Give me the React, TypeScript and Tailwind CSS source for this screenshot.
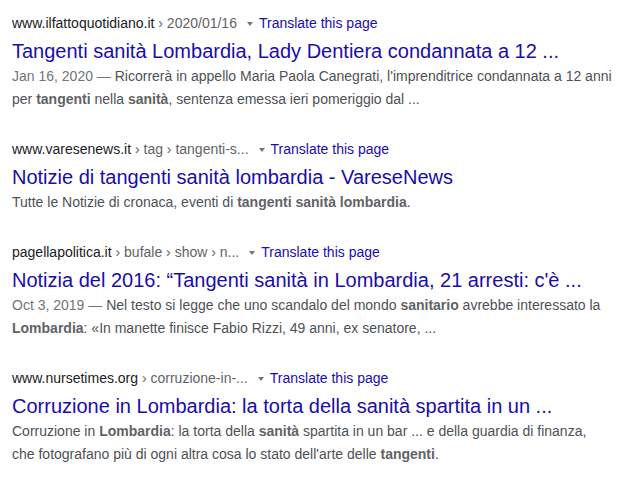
import React from "react";

type Part = string | { b: string };

interface R {
  domain: string;
  path: string;
  title: string;
  date?: string;
  snippet: Part[][];
}

const results: R[] = [
  {
    domain: "www.ilfattoquotidiano.it",
    path: "\u00a0› 2020/01/16",
    title: "Tangenti sanità Lombardia, Lady Dentiera condannata a 12 ...",
    date: "Jan 16, 2020",
    snippet: [
      ["Ricorrerà in appello Maria Paola Canegrati, l'imprenditrice condannata a 12 anni"],
      ["per ", { b: "tangenti" }, " nella ", { b: "sanità" }, ", sentenza emessa ieri pomeriggio dal ..."],
    ],
  },
  {
    domain: "www.varesenews.it",
    path: "\u00a0› tag › tangenti-s...",
    title: "Notizie di tangenti sanità lombardia - VareseNews",
    snippet: [["Tutte le Notizie di cronaca, eventi di ", { b: "tangenti sanità lombardia" }, "."]],
  },
  {
    domain: "pagellapolitica.it",
    path: "\u00a0› bufale › show › n...",
    title: "Notizia del 2016: “Tangenti sanità in Lombardia, 21 arresti: c'è ...",
    date: "Oct 3, 2019",
    snippet: [
      ["Nel testo si legge che uno scandalo del mondo ", { b: "sanitario" }, " avrebbe interessato la"],
      [{ b: "Lombardia" }, ": «In manette finisce Fabio Rizzi, 49 anni, ex senatore, ..."],
    ],
  },
  {
    domain: "www.nursetimes.org",
    path: "\u00a0› corruzione-in-...",
    title: "Corruzione in Lombardia: la torta della sanità spartita in un ...",
    snippet: [
      ["Corruzione in ", { b: "Lombardia" }, ": la torta della ", { b: "sanità" }, " spartita in un bar ... e della guardia di finanza,"],
      ["che fotografano più di ogni altra cosa lo stato dell'arte delle ", { b: "tangenti" }, "."],
    ],
  },
];

function Line({ parts, date }: { parts: Part[]; date?: string }) {
  return (
    <div className="h-[23px] leading-[23px] whitespace-nowrap">
      {date && <span className="text-[#70757a]">{date} — </span>}
      {parts.map((p, i) =>
        typeof p === "string" ? (
          <span key={i}>{p}</span>
        ) : (
          <b key={i} className="font-bold text-[#5f6368]">
            {p.b}
          </b>
        )
      )}
    </div>
  );
}

export default function App() {
  return (
    <div
      className="w-[626px] h-[489px] bg-white pt-[11px] pl-[12px] flex flex-col gap-[26px] overflow-hidden"
      style={{ fontFamily: '"Liberation Sans", Arial, sans-serif' }}
    >
      {results.map((r, i) => (
        <div key={i} className="flex flex-col">
          <div className="h-[24px] leading-[24px] text-[14px] whitespace-nowrap flex items-center">
            <span className="text-[#202124]">{r.domain}</span>
            <span className="text-[#5f6368]">{r.path}</span>
            <svg className="ml-[10px] mr-[6px] mt-[1px]" width="6" height="4" viewBox="0 0 6 4">
              <path d="M0 0 L6 0 L3 4 Z" fill="#70757a" />
            </svg>
            <span className="text-[#1a0dab]">Translate this page</span>
          </div>
          <div className="mt-[2px] h-[28px] leading-[28px] text-[20px] text-[#1a0dab] whitespace-nowrap">
            {r.title}
          </div>
          <div className="text-[14px] text-[#4d5156]">
            {r.snippet.map((l, j) => (
              <Line key={j} parts={l} date={j === 0 ? r.date : undefined} />
            ))}
          </div>
        </div>
      ))}
    </div>
  );
}
